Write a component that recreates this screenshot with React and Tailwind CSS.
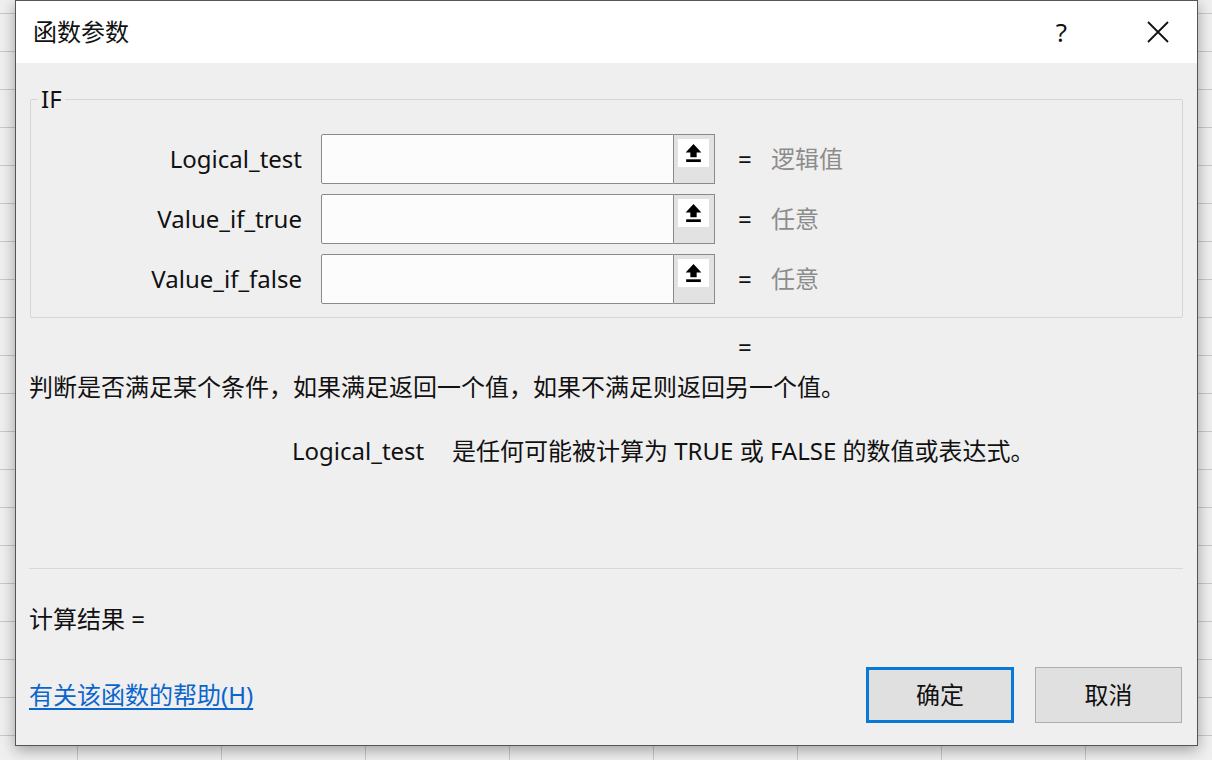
import React from "react";

const font = { fontFamily: '"Noto Sans", "Noto Sans CJK SC", sans-serif' };

function UploadIcon() {
  return (
    <svg width="21" height="20" viewBox="0 0 20 19">
      <path d="M10 1 L2.5 9 H7 V13.5 H13 V9 H17.5 Z" fill="#000" />
      <rect x="3" y="15.5" width="14" height="2.6" fill="#000" />
    </svg>
  );
}

function ArgRow({ label, result }) {
  return (
    <div className="flex items-center h-[50px]">
      <div className="w-[272px] text-right text-[24px] text-[#111] pr-[1px]">{label}</div>
      <div className="ml-[18px] flex h-[50px]">
        <div className="w-[353px] h-full bg-[#fdfcfd] border border-[#8a8a8a] rounded-l-[2px]" />
        <div className="w-[41px] h-full bg-[#e3e2e3] border border-l-0 border-[#8a8a8a] pl-[4px] pt-[4px] pr-[5px] pb-[16px]">
          <div className="w-full h-full bg-white flex items-center justify-center">
            <UploadIcon />
          </div>
        </div>
      </div>
      <div className="ml-[23px] text-[24px] text-[#111] w-[12px]">=</div>
      <div className="ml-[21px] text-[24px] text-[#8c8c8c]">{result}</div>
    </div>
  );
}

export default function App() {
  const rows = Array.from({ length: 21 });
  const cols = Array.from({ length: 10 });

  return (
    <div className="relative w-[1212px] h-[760px] overflow-hidden bg-[#ededed]" style={font}>
      {/* spreadsheet behind the dialog */}
      <div className="absolute left-[-66px] top-[-24px] flex flex-col">
        {rows.map((_, r) => (
          <div key={r} className="flex">
            {cols.map((_, c) => (
              <div key={c} className="w-[144px] h-[38px] border-r border-b border-[#c9c9c9] bg-[#f0f0f0]" />
            ))}
          </div>
        ))}
      </div>

      {/* dialog window */}
      <div className="absolute left-[15px] top-0 w-[1183px] h-[746px] border border-[#555] bg-[#f0eff0] shadow-[0_4px_14px_rgba(0,0,0,0.35)] flex flex-col">
        <div className="h-[62px] bg-white flex items-center pl-[17px] pr-[28px]">
          <div className="text-[24px] text-[#111] flex-1">函数参数</div>
          <div className="text-[26px] text-[#111] mr-[80px]">?</div>
          <svg width="22" height="22" viewBox="0 0 22 22">
            <path d="M1 1 L21 21 M21 1 L1 21" stroke="#111" strokeWidth="1.8" />
          </svg>
        </div>

        <div className="flex-1 flex flex-col px-[13px]">
          <fieldset className="mt-[26px] mx-[1px] border border-[#d6d5d6] rounded-[2px] pb-[13px]">
            <legend className="ml-[7px] px-[3px] text-[24px] text-[#111] leading-[20px]">IF</legend>
            <div className="mt-[25px] flex flex-col gap-[10px]">
              <ArgRow label="Logical_test" result="逻辑值" />
              <ArgRow label="Value_if_true" result="任意" />
              <ArgRow label="Value_if_false" result="任意" />
            </div>
          </fieldset>

          <div className="mt-[15px] pl-[709px] text-[24px] text-[#111] leading-[28px]">=</div>

          <div className="mt-[10px] text-[24px] text-[#111] leading-[32px]">
            判断是否满足某个条件，如果满足返回一个值，如果不满足则返回另一个值。
          </div>

          <div className="mt-[33px] flex text-[24px] text-[#111] leading-[30px]">
            <div className="pl-[263px] w-[423px]">Logical_test</div>
            <div>是任何可能被计算为 TRUE 或 FALSE 的数值或表达式。</div>
          </div>

          <div className="mt-[102px] h-px bg-[#d9d8d9] mr-[1px]" />

          <div className="mt-[35px] text-[24px] text-[#111] leading-[30px]">计算结果 =</div>

          <div className="mt-[33px] flex items-center">
            <a href="#" className="text-[24px] text-[#0a66cc] underline underline-offset-[4px] leading-[30px]">
              有关该函数的帮助(H)
            </a>
            <div className="flex-1" />
            <button className="w-[148px] h-[56px] border-[3px] border-[#0a78d7] bg-[#e1e0e1] text-[24px] text-[#111]">
              确定
            </button>
            <button className="ml-[21px] mr-[2px] w-[147px] h-[56px] border border-[#adadad] bg-[#e1e0e1] text-[24px] text-[#111]">
              取消
            </button>
          </div>
        </div>
      </div>
    </div>
  );
}
